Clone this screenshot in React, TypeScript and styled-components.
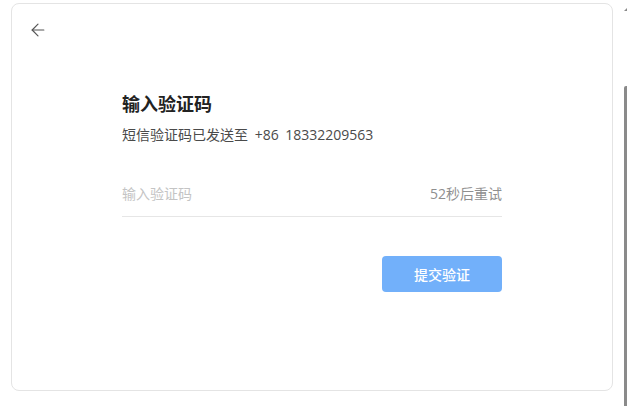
import { createGlobalStyle, styled } from "styled-components";
import { ArrowLeft } from "lucide-react";

const GlobalStyle = createGlobalStyle`
  html, body {
    margin: 0;
    padding: 0;
    background: #fff;
    font-family: "Open Sans", "Noto Sans CJK SC", sans-serif;
  }
`;

const VerifyCode = () => {
  return (
    <Page>
      <GlobalStyle />
      <Card>
        <BackButton aria-label="返回">
          <ArrowLeft size={20} strokeWidth={1.4} />
        </BackButton>
        <Form>
          <Title>输入验证码</Title>
          <Subtitle>短信验证码已发送至 +86 18332209563</Subtitle>
          <InputRow>
            <CodeInput placeholder="输入验证码" />
            <Countdown>52秒后重试</Countdown>
          </InputRow>
          <Actions>
            <SubmitButton disabled>提交验证</SubmitButton>
          </Actions>
        </Form>
      </Card>
      <ScrollTrack>
        <ScrollArrow />
        <ScrollThumb />
      </ScrollTrack>
    </Page>
  );
};

export default VerifyCode;

const Page = styled.div`
  display: flex;
  height: 406px;
  padding: 3px 0 0 11px;
  box-sizing: border-box;
`;

const Card = styled.div`
  width: 602px;
  height: 388px;
  box-sizing: border-box;
  border: 1px solid #e4e4e4;
  border-radius: 8px;
  background: #fff;
  padding: 16px 0 0 16px;
`;

const BackButton = styled.button`
  display: flex;
  align-items: center;
  justify-content: center;
  width: 20px;
  height: 20px;
  padding: 0;
  border: none;
  background: transparent;
  color: #555;
  cursor: pointer;
`;

const Form = styled.div`
  width: 380px;
  margin: 51px 0 0 94px;
  display: flex;
  flex-direction: column;
`;

const Title = styled.h2`
  margin: 0;
  font-size: 18px;
  line-height: 26px;
  font-weight: 700;
  color: #222;
`;

const Subtitle = styled.p`
  margin: 7px 0 0;
  font-size: 14px;
  line-height: 22px;
  word-spacing: 3px;
  color: #4a4a4a;
`;

const InputRow = styled.div`
  display: flex;
  align-items: center;
  justify-content: space-between;
  margin-top: 24px;
  height: 46px;
  border-bottom: 1px solid #e6e6e6;
`;

const CodeInput = styled.input`
  flex: 1;
  border: none;
  outline: none;
  padding: 0;
  font-family: inherit;
  font-size: 14px;
  color: #333;
  background: transparent;
  &::placeholder {
    color: #c4c4c4;
  }
`;

const Countdown = styled.span`
  font-size: 14px;
  color: #8f8f8f;
`;

const Actions = styled.div`
  display: flex;
  justify-content: flex-end;
  margin-top: 39px;
`;

const SubmitButton = styled.button`
  width: 120px;
  height: 36px;
  border: none;
  border-radius: 4px;
  background: #72b0fa;
  color: #fff;
  font-family: inherit;
  font-size: 14px;
  font-weight: 500;
  cursor: not-allowed;
`;

const ScrollTrack = styled.div`
  margin-left: 11px;
  width: 3px;
  display: flex;
  flex-direction: column;
  align-items: flex-end;
`;

const ScrollArrow = styled.div`
  margin-top: 5px;
  width: 0;
  height: 0;
  border-left: 3px solid transparent;
  border-bottom: 3px solid #8a8a8a;
`;

const ScrollThumb = styled.div`
  margin-top: 75px;
  width: 3px;
  flex: 1;
  background: #8a8a8a;
  border-top-left-radius: 2px;
`;
